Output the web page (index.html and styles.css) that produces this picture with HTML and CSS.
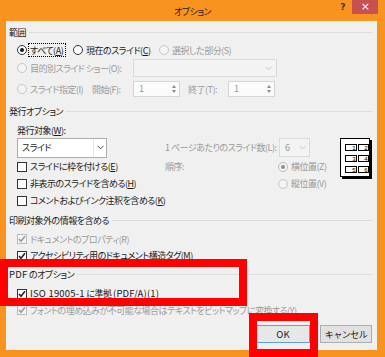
FILE: index.html
```html
<!DOCTYPE html>
<html lang="ja">
  <head>
    <meta charset="UTF-8" />
    <title>オプション</title>
    <link rel="stylesheet" href="styles.css">
  </head>
  <body>
    <div class="window">
      <div class="titlebar">
        <span></span>
        <span class="title">オプション</span>
        <div class="caption-buttons">
          <span class="help">?</span>
          <span class="close">×</span>
        </div>
      </div>

      <div class="client">
        <!-- 範囲 -->
        <div class="legend h-legend1">範囲</div>
        <div class="row h-r1">
          <label class="opt w-all"><span class="radio on"></span><span class="focus">すべて(<u>A</u>)</span></label>
          <label class="opt w-cur"><span class="radio"></span><span>現在のスライド(<u>C</u>)</span></label>
          <label class="opt off"><span class="radio"></span><span>選択した部分(S)</span></label>
        </div>
        <div class="row h-r2">
          <label class="opt off w-custom"><span class="radio"></span><span>目的別スライド ショー(O):</span></label>
          <span class="combo">
            <svg width="7" height="5" viewBox="0 0 7 5"><polyline points="0.5,0.8 3.5,3.8 6.5,0.8" fill="none" stroke="#c4c4c4" stroke-width="1"/></svg>
          </span>
        </div>
        <div class="row h-r3">
          <label class="opt off w-range"><span class="radio"></span><span>スライド指定(I)</span></label>
          <span class="field-label off w-from">開始(F):</span>
          <span class="spin"><span class="val">1</span><span class="arrows"><i class="up"></i><i class="down"></i></span></span>
          <span class="field-label off w-to">終了(T):</span>
          <span class="spin"><span class="val">1</span><span class="arrows"><i class="up"></i><i class="down"></i></span></span>
        </div>

        <!-- 発行オプション -->
        <div class="legend h-legend2">発行オプション</div>
        <div class="publish">
          <span class="cell-label">発行対象(<u>W</u>):</span>
          <span class="select">
            <span class="text">スライド</span>
            <span class="drop">
              <svg width="7" height="5" viewBox="0 0 7 5"><polyline points="0.5,0.8 3.5,3.8 6.5,0.8" fill="none" stroke="#444" stroke-width="1"/></svg>
            </span>
          </span>
          <span class="off per-page">1 ページあたりのスライド数(L):</span>
          <span class="select small off">
            <span class="text">6</span>
            <span class="drop">
              <svg width="7" height="5" viewBox="0 0 7 5"><polyline points="0.5,0.8 3.5,3.8 6.5,0.8" fill="none" stroke="#c4c4c4" stroke-width="1"/></svg>
            </span>
          </span>
          <svg class="layout-icon" width="33" height="42" viewBox="0 0 33 42">
            <rect x="2" y="2" width="30" height="39" fill="#000"/>
            <rect x="0.5" y="0.5" width="29" height="38" fill="#fff" stroke="#000"/>
            <g fill="#fff" stroke="#000" stroke-width="1">
              <rect x="5.5" y="6.5" width="11" height="6"/>
              <rect x="18.5" y="6.5" width="10" height="6"/>
              <rect x="5.5" y="17.5" width="11" height="6"/>
              <rect x="18.5" y="17.5" width="10" height="6"/>
              <rect x="5.5" y="28.5" width="11" height="6"/>
              <rect x="18.5" y="28.5" width="10" height="6"/>
            </g>
            <g font-family="Liberation Sans, sans-serif" font-size="6" fill="#000" text-anchor="end">
              <text x="15" y="12">1</text>
              <text x="27" y="12">2</text>
              <text x="15" y="23">3</text>
              <text x="27" y="23">4</text>
              <text x="15" y="34">5</text>
              <text x="27" y="34">6</text>
            </g>
          </svg>

          <label class="opt c1"><span class="check"></span><span>スライドに枠を付ける(<u>E</u>)</span></label>
          <span class="off c2">順序:</span>
          <label class="opt off c3"><span class="radio on"></span><span>横位置(Z)</span></label>

          <label class="opt c1"><span class="check"></span><span>非表示のスライドを含める(<u>H</u>)</span></label>
          <label class="opt off c3"><span class="radio"></span><span>縦位置(V)</span></label>

          <label class="opt span-all"><span class="check"></span><span>コメントおよびインク注釈を含める(<u>K</u>)</span></label>
        </div>

        <!-- 印刷対象外の情報を含める -->
        <div class="legend h-legend3">印刷対象外の情報を含める</div>
        <div class="row h-r4">
          <label class="opt off"><span class="check on"><svg width="8" height="8" viewBox="0 0 8 8"><polyline points="1,4 3,6.3 7,1.3" fill="none" stroke="#9a9a9a" stroke-width="1.6"/></svg></span><span>ドキュメントのプロパティ(R)</span></label>
        </div>
        <div class="row h-r5">
          <label class="opt"><span class="check on"><svg width="8" height="8" viewBox="0 0 8 8"><polyline points="1,4 3,6.3 7,1.3" fill="none" stroke="#222" stroke-width="1.6"/></svg></span><span>アクセシビリティ用のドキュメント構造タグ(<u>M</u>)</span></label>
        </div>

        <!-- PDF のオプション -->
        <div class="legend h-legend4"><span><span class="en">PDF</span> のオプション</span></div>
        <div class="row h-r6">
          <label class="opt"><span class="check on"><svg width="8" height="8" viewBox="0 0 8 8"><polyline points="1,4 3,6.3 7,1.3" fill="none" stroke="#222" stroke-width="1.6"/></svg></span><span><span class="en">ISO 19005-1</span> に準拠 <span class="en">(PDF/A)(<u>1</u>)</span></span></label>
        </div>
        <div class="row h-r7">
          <label class="opt off"><span class="check on"><svg width="8" height="8" viewBox="0 0 8 8"><polyline points="1,4 3,6.3 7,1.3" fill="none" stroke="#9a9a9a" stroke-width="1.6"/></svg></span><span>フォントの埋め込みが不可能な場合はテキストをビットマップに変換する(Y)</span></label>
        </div>

        <div class="buttons">
          <button class="btn default"><span class="en">OK</span></button>
          <button class="btn">キャンセル</button>
        </div>
      </div>

      <!-- red annotation frames -->
      <div class="mark mark-pdf"></div>
      <div class="mark mark-ok"></div>
    </div>
  </body>
</html>
```

FILE: styles.css
```css
* {
  box-sizing: border-box;
}

body {
  margin: 0;
  font-family: "Noto Sans CJK JP", "Noto Sans", sans-serif;
  font-size: 9px;
  font-feature-settings: "palt";
  letter-spacing: -0.5px;
  line-height: 1;
  color: #1a1a1a;
  background: #fff;
}

/* latin runs are wider in the original UI font */
.en {
  font-size: 9.5px;
  letter-spacing: 0.2px;
}

u {
  text-decoration-thickness: 1px;
  text-underline-offset: 1px;
}

.window {
  position: relative;
  width: 385px;
  height: 357px;
  background: #f7931e;
  display: flex;
  flex-direction: column;
  overflow: hidden;
}

/* title bar */
.titlebar {
  height: 21px;
  display: grid;
  grid-template-columns: 1fr auto 1fr;
}
.title {
  align-self: center;
  padding-top: 2px;
  color: #222;
}
.caption-buttons {
  display: flex;
  justify-content: flex-end;
  align-items: flex-start;
  padding-right: 7px;
}
.help {
  font-family: "DejaVu Sans", sans-serif;
  font-weight: bold;
  font-size: 9px;
  line-height: 14px;
  color: #3a3a3a;
  margin-right: 7px;
}
.close {
  width: 26px;
  height: 14px;
  background: #c75050;
  color: #fff;
  font-family: "DejaVu Sans", sans-serif;
  font-size: 11px;
  line-height: 13px;
  text-align: center;
}

/* client area */
.client {
  flex: 1;
  margin: 0 8px 7px 6px;
  background: #f0f0f0;
  padding: 0 5px 0 3px;
  display: flex;
  flex-direction: column;
}

.legend {
  display: flex;
  align-items: center;
  gap: 3px;
  color: #1a1a1a;
}
.legend::after {
  content: "";
  flex: 1;
  border-top: 1px solid #dcdcdc;
}
.h-legend1 { height: 22px; }
.h-legend2 { height: 24px; }
.h-legend3 { height: 22px; }
.h-legend4 { height: 21px; }

.row {
  display: flex;
  align-items: center;
  padding-left: 8px;
  white-space: nowrap;
}
.h-r1 { height: 14px; }
.h-r2 { height: 22px; }
.h-r3 { height: 20px; }
.h-r4 { height: 16px; }
.h-r5 { height: 17px; }
.h-r6 { height: 17px; }
.h-r7 { height: 16px; }

.off {
  color: #9a9a9a;
}

.opt {
  display: flex;
  align-items: center;
  gap: 3px;
  white-space: nowrap;
}
.w-all { width: 56px; gap: 2px; }
.w-cur { width: 86px; }
.w-custom { width: 116px; }
.w-range { width: 75px; }

.focus {
  outline: 1px dotted #000;
  outline-offset: 0;
  padding: 2px 2px 1px 1px;
}

.radio {
  flex: none;
  width: 10px;
  height: 10px;
  border: 1px solid #333;
  border-radius: 50%;
  background: #fff;
  display: flex;
  align-items: center;
  justify-content: center;
}
.radio.on::after {
  content: "";
  width: 4px;
  height: 4px;
  border-radius: 50%;
  background: #1a1a1a;
}
.off .radio {
  border-color: #c6c6c6;
  background: #f4f4f4;
}
.off .radio.on {
  border-color: #bdbdbd;
}
.off .radio.on::after {
  background: #8c8c8c;
}

.check {
  flex: none;
  width: 10px;
  height: 10px;
  border: 1px solid #333;
  background: #fff;
  display: flex;
  align-items: center;
  justify-content: center;
}
.off .check {
  border-color: #bcbcbc;
  background: #f4f4f4;
}

/* disabled combo and spinners */
.combo {
  width: 144px;
  height: 18px;
  border: 1px solid #d9d9d9;
  background: #f3f3f3;
  display: flex;
  align-items: center;
  justify-content: flex-end;
  padding-right: 4px;
}

.field-label {
  white-space: nowrap;
}
.w-from { width: 41px; margin-left: 0; }
.w-to { width: 40px; margin-left: 8px; }

.spin {
  width: 47px;
  height: 16px;
  border: 1px solid #d5d5d5;
  background: #fbfbfb;
  display: flex;
}
.spin .val {
  flex: 1;
  padding-left: 5px;
  line-height: 14px;
  color: #9a9a9a;
}
.arrows {
  width: 10px;
  display: flex;
  flex-direction: column;
  justify-content: space-evenly;
  align-items: center;
}
.arrows i {
  display: block;
  width: 0;
  height: 0;
  border-left: 2px solid transparent;
  border-right: 2px solid transparent;
}
.arrows .up { border-bottom: 3px solid #8a8a8a; }
.arrows .down { border-top: 3px solid #8a8a8a; }

/* publish options */
.publish {
  display: grid;
  grid-template-columns: 148px 114px 61px 32px;
  grid-template-rows: 14px 21px 17px 17px 17px;
  align-items: center;
  padding-left: 8px;
  white-space: nowrap;
}
.publish .cell-label {
  grid-column: 1 / -1;
}
.select {
  width: 90px;
  height: 20px;
  border: 1px solid #acacac;
  background: #fff;
  display: flex;
}
.select .text {
  flex: 1;
  padding-left: 4px;
  line-height: 18px;
}
.select .drop {
  width: 13px;
  border-left: 1px solid #e3e3e3;
  display: flex;
  align-items: center;
  justify-content: center;
}
.select.small {
  width: 31px;
  height: 19px;
  border-color: #d9d9d9;
  background: #f3f3f3;
}
.select.small .text {
  line-height: 17px;
  padding-left: 5px;
}
.select.small .drop {
  border-left: none;
}
.per-page {
  grid-column: 2;
}
.layout-icon {
  grid-column: 4;
  grid-row: 2 / 5;
  align-self: start;
  margin-top: 1px;
}
.c1 { grid-column: 1; }
.c2 { grid-column: 2; }
.c3 { grid-column: 3; margin-left: -1px; }
.span-all { grid-column: 1 / 4; }

/* buttons */
.buttons {
  display: flex;
  justify-content: flex-end;
  gap: 10px;
  padding-top: 7px;
}
.btn {
  height: 18px;
  width: 52px;
  padding: 0;
  border: 1px solid #adadad;
  background: #e1e1e1;
  font-family: inherit;
  font-size: 9px;
  letter-spacing: -0.5px;
  color: #1a1a1a;
}
.btn.default {
  width: 54px;
  border-color: #5aa0e0;
  background: #e7e7e7;
}

/* red annotation frames */
.mark {
  position: absolute;
  border: 8px solid #ff0000;
}
.mark-pdf {
  left: 0;
  top: 259px;
  width: 247px;
  height: 47px;
}
.mark-ok {
  left: 249px;
  top: 313px;
  width: 69px;
  height: 44px;
}
```
